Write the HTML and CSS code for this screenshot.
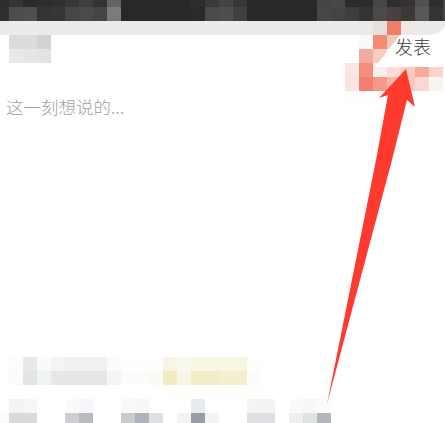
FILE: index.html
```html
<!DOCTYPE html>
<html lang="zh-CN">
<head>
<meta charset="utf-8">
<title>发表</title>
<link rel="stylesheet" href="styles.css">
</head>
<body>
<div class="page">
  <div class="topbar"></div>
  <div class="band"></div>
  <main class="composer">
    <div class="actions"><span class="publish">发表</span></div>
    <p class="placeholder">这一刻想说的...</p>
  </main>
  <svg class="overlay" width="445" height="423" viewBox="0 0 445 423" aria-hidden="true">
    <g shape-rendering="crispEdges">
      <!-- top strip, row A -->
      <rect x="0" y="0" width="9" height="7" fill="#2e2e2e"/>
      <rect x="9" y="0" width="14" height="7" fill="#333333"/>
      <rect x="23" y="0" width="14" height="7" fill="#2a2a2a"/>
      <rect x="37" y="0" width="14" height="7" fill="#2e2e2e"/>
      <rect x="51" y="0" width="14" height="7" fill="#303030"/>
      <rect x="65" y="0" width="14" height="7" fill="#363636"/>
      <rect x="79" y="0" width="14" height="7" fill="#404040"/>
      <rect x="93" y="0" width="14" height="7" fill="#333333"/>
      <rect x="107" y="0" width="14" height="7" fill="#636363"/>
      <rect x="191" y="0" width="14" height="7" fill="#2d2d2d"/>
      <rect x="205" y="0" width="14" height="7" fill="#3a3a3a"/>
      <rect x="219" y="0" width="14" height="7" fill="#444444"/>
      <rect x="233" y="0" width="14" height="7" fill="#363636"/>
      <rect x="317" y="0" width="14" height="7" fill="#444444"/>
      <rect x="331" y="0" width="14" height="7" fill="#484848"/>
      <rect x="345" y="0" width="14" height="7" fill="#2c2c2c"/>
      <rect x="359" y="0" width="14" height="7" fill="#2c2c2c"/>
      <rect x="373" y="0" width="14" height="7" fill="#464646"/>
      <rect x="387" y="0" width="14" height="7" fill="#2e2e2e"/>
      <rect x="401" y="0" width="14" height="7" fill="#333333"/>
      <rect x="415" y="0" width="14" height="7" fill="#505050"/>
      <rect x="429" y="0" width="14" height="7" fill="#2e2e2e"/>
      <rect x="443" y="0" width="2" height="7" fill="#444444"/>
      <!-- top strip, row B -->
      <rect x="0" y="7" width="9" height="14" fill="#2f2f2f"/>
      <rect x="9" y="7" width="14" height="14" fill="#4c4c4c"/>
      <rect x="23" y="7" width="14" height="14" fill="#505050"/>
      <rect x="37" y="7" width="14" height="14" fill="#343434"/>
      <rect x="51" y="7" width="14" height="14" fill="#363636"/>
      <rect x="65" y="7" width="14" height="14" fill="#464646"/>
      <rect x="79" y="7" width="14" height="14" fill="#4a4a4a"/>
      <rect x="93" y="7" width="14" height="14" fill="#454545"/>
      <rect x="107" y="7" width="14" height="14" fill="#7b7b7b"/>
      <rect x="191" y="7" width="14" height="14" fill="#2a2a2a"/>
      <rect x="205" y="7" width="14" height="14" fill="#4a4a4a"/>
      <rect x="219" y="7" width="14" height="14" fill="#4e4e4e"/>
      <rect x="233" y="7" width="14" height="14" fill="#404040"/>
      <rect x="317" y="7" width="14" height="14" fill="#474747"/>
      <rect x="331" y="7" width="14" height="14" fill="#444444"/>
      <rect x="345" y="7" width="14" height="14" fill="#3e3e3e"/>
      <rect x="359" y="7" width="14" height="14" fill="#333333"/>
      <rect x="373" y="7" width="14" height="14" fill="#4a4a4a"/>
      <rect x="387" y="7" width="14" height="14" fill="#4a4040"/>
      <rect x="401" y="7" width="14" height="14" fill="#3c3835"/>
      <rect x="415" y="7" width="14" height="14" fill="#585858"/>
      <rect x="429" y="7" width="14" height="14" fill="#343434"/>
      <rect x="443" y="7" width="2" height="14" fill="#444444"/>
      <!-- avatar mosaic -->
      <rect x="9" y="35" width="14" height="14" fill="#dcdcdc"/>
      <rect x="23" y="35" width="14" height="14" fill="#dcdcdc"/>
      <rect x="37" y="35" width="14" height="14" fill="#d3d3d3"/>
      <rect x="9" y="49" width="14" height="14" fill="#e9e9e9"/>
      <rect x="23" y="49" width="14" height="14" fill="#e5e5e5"/>
      <rect x="37" y="49" width="14" height="14" fill="#e3e3e3"/>
      <!-- red mosaic behind publish -->
      <rect x="373" y="21" width="14" height="14" fill="#e8e0dc"/>
      <rect x="387" y="21" width="14" height="14" fill="#ee7f68"/>
      <rect x="401" y="21" width="14" height="14" fill="#eee8e4"/>
      <rect x="359" y="35" width="14" height="14" fill="#faf9f8"/>
      <rect x="373" y="35" width="14" height="14" fill="#f48b74"/>
      <rect x="387" y="35" width="14" height="14" fill="#eecabd"/>
      <rect x="359" y="49" width="14" height="14" fill="#f5aaa0"/>
      <rect x="373" y="49" width="14" height="14" fill="#f6cdc4"/>
      <rect x="345" y="63" width="14" height="14" fill="#f8e6e2"/>
      <rect x="359" y="63" width="14" height="14" fill="#f38d7c"/>
      <rect x="373" y="63" width="14" height="14" fill="#f9eee9"/>
      <rect x="387" y="63" width="14" height="14" fill="#f9dcd6"/>
      <rect x="401" y="63" width="14" height="14" fill="#f8cbc0"/>
      <rect x="415" y="63" width="14" height="14" fill="#f6aa9b"/>
      <rect x="429" y="63" width="14" height="14" fill="#f9d5cc"/>
      <rect x="345" y="77" width="14" height="14" fill="#f8e4e0"/>
      <rect x="359" y="77" width="14" height="14" fill="#f37f70"/>
      <rect x="373" y="77" width="14" height="14" fill="#f59a88"/>
      <rect x="387" y="77" width="14" height="14" fill="#f8b6a8"/>
      <rect x="401" y="77" width="14" height="14" fill="#f9c6bc"/>
      <rect x="415" y="77" width="14" height="14" fill="#f9d8d2"/>
      <rect x="429" y="77" width="14" height="14" fill="#fbf3f0"/>
      <rect x="345" y="91" width="56" height="14" fill="#fefcfc"/>
      <!-- caption mosaic -->
      <rect x="9" y="357" width="14" height="14" fill="#fbfcfc"/>
      <rect x="23" y="357" width="14" height="14" fill="#e8e9eb"/>
      <rect x="37" y="357" width="14" height="14" fill="#f8fafc"/>
      <rect x="51" y="357" width="14" height="14" fill="#f3f4f6"/>
      <rect x="65" y="357" width="42" height="14" fill="#eff1f1"/>
      <rect x="107" y="357" width="14" height="14" fill="#fcfcfc"/>
      <rect x="121" y="357" width="42" height="14" fill="#fefefe"/>
      <rect x="163" y="357" width="14" height="14" fill="#f8f5e4"/>
      <rect x="177" y="357" width="14" height="14" fill="#f9f9ef"/>
      <rect x="191" y="357" width="56" height="14" fill="#f7f6e3"/>
      <rect x="247" y="357" width="14" height="14" fill="#fefefa"/>
      <rect x="9" y="371" width="14" height="14" fill="#fbfbfb"/>
      <rect x="23" y="371" width="14" height="14" fill="#e2e5e6"/>
      <rect x="37" y="371" width="14" height="14" fill="#f2f3f3"/>
      <rect x="51" y="371" width="14" height="14" fill="#e6e7e7"/>
      <rect x="65" y="371" width="42" height="14" fill="#e6e6e6"/>
      <rect x="107" y="371" width="14" height="14" fill="#f4f5f5"/>
      <rect x="121" y="371" width="28" height="14" fill="#fcfcfc"/>
      <rect x="149" y="371" width="14" height="14" fill="#fafaf6"/>
      <rect x="163" y="371" width="14" height="14" fill="#f3ebc4"/>
      <rect x="177" y="371" width="14" height="14" fill="#f7f5e4"/>
      <rect x="191" y="371" width="28" height="14" fill="#f3ecc8"/>
      <rect x="219" y="371" width="28" height="14" fill="#f4efd0"/>
      <rect x="247" y="371" width="14" height="14" fill="#fcfcfc"/>
      <rect x="163" y="385" width="98" height="14" fill="#fefefa"/>
      <!-- toolbar mosaic -->
      <rect x="9" y="399" width="14" height="14" fill="#f2f4f3"/>
      <rect x="23" y="399" width="14" height="14" fill="#f5f6f5"/>
      <rect x="65" y="399" width="14" height="14" fill="#f8fafb"/>
      <rect x="79" y="399" width="14" height="14" fill="#f6f7f9"/>
      <rect x="121" y="399" width="14" height="14" fill="#f8f9f9"/>
      <rect x="135" y="399" width="14" height="14" fill="#f6f8f8"/>
      <rect x="191" y="399" width="14" height="14" fill="#e9eaed"/>
      <rect x="247" y="399" width="14" height="14" fill="#f3f4f6"/>
      <rect x="261" y="399" width="14" height="14" fill="#f2f3f5"/>
      <rect x="289" y="399" width="14" height="14" fill="#fafafa"/>
      <rect x="303" y="399" width="14" height="14" fill="#f6f8f7"/>
      <rect x="317" y="399" width="14" height="14" fill="#fafbfb"/>
      <rect x="0" y="413" width="9" height="10" fill="#fcfcfc"/>
      <rect x="9" y="413" width="28" height="10" fill="#d8dadb"/>
      <rect x="65" y="413" width="14" height="10" fill="#ccced2"/>
      <rect x="79" y="413" width="14" height="10" fill="#b8bbc1"/>
      <rect x="121" y="413" width="14" height="10" fill="#c9cbcf"/>
      <rect x="135" y="413" width="14" height="10" fill="#b0b3bb"/>
      <rect x="149" y="413" width="14" height="10" fill="#dfe0e4"/>
      <rect x="177" y="413" width="14" height="10" fill="#f3f3f4"/>
      <rect x="191" y="413" width="14" height="10" fill="#989ca7"/>
      <rect x="205" y="413" width="14" height="10" fill="#f3f3f3"/>
      <rect x="247" y="413" width="14" height="10" fill="#dfe0e0"/>
      <rect x="261" y="413" width="14" height="10" fill="#dfe0e4"/>
      <rect x="289" y="413" width="14" height="10" fill="#eeeff1"/>
      <rect x="303" y="413" width="14" height="10" fill="#e1e3e2"/>
      <rect x="317" y="413" width="14" height="10" fill="#b4b6be"/>
    </g>
    <!-- rounded sheet corner and white callout -->
    <path d="M428 35Q440 34 445 27V35Z" fill="#ffffff"/>
    <path d="M375 67L396 40L400 35H445V67Z" fill="#ffffff"/>
    <!-- red arrow -->
    <path d="M406 69L415 107L407 100L392 160L327 404L376 160L388 95L379 98Z" fill="#ff3b30"/>
  </svg>
</div>
</body>
</html>
```
FILE: styles.css
```css
html, body {
  margin: 0;
  padding: 0;
  background: #ffffff;
}

.page {
  position: relative;
  width: 445px;
  height: 423px;
  overflow: hidden;
  background: #ffffff;
  font-family: "Noto Sans CJK SC", "Liberation Sans", sans-serif;
}

.topbar {
  height: 21px;
  background: #282828;
}

.band {
  height: 14px;
  background: #ebebeb;
}

.overlay {
  position: absolute;
  top: 0;
  left: 0;
}

.composer {
  position: relative;
  z-index: 1;
}

.actions {
  display: flex;
  justify-content: flex-end;
  padding-right: 14px;
  height: 24px;
}

.publish {
  font-size: 18px;
  font-weight: 300;
  line-height: 22px;
  color: #3a3a3a;
}

.placeholder {
  margin: 36px 0 0;
  padding-left: 6px;
  font-size: 17.5px;
  font-weight: 300;
  line-height: 24px;
  color: #a0a0a0;
}
```
